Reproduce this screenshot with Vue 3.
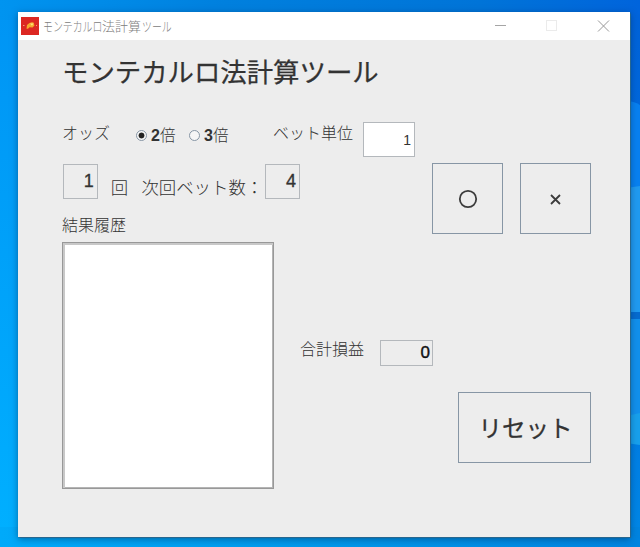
<script setup>
import { ref } from 'vue'

const odds = ref(2)
const unit = ref(1)
const count = ref(1)
const nextBet = ref(4)
const total = ref(0)
const history = ref([])

function reset() {
  count.value = 1
  nextBet.value = 4
  total.value = 0
  history.value = []
}
</script>

<template>
  <div class="desktop">
    <svg class="wallpaper" width="640" height="547" viewBox="0 0 640 547" aria-hidden="true">
      <path d="M626 101 Q634 101 640 105 V188 H626Z" fill="#0880f0" />
      <path d="M626 188 L640 186 V312 H626Z" fill="#209af0" />
      <path d="M626 319 H640 V414 L626 416Z" fill="#1290ec" />
      <path d="M626 416 L640 413 V445 L626 443Z" fill="#18a0ec" />
      <path d="M626 312 H640 V319 H626Z" fill="#066bcf" />
    </svg>
    <main class="window">
      <header class="titlebar">
        <svg class="app-icon" width="18" height="18" viewBox="0 0 18 18">
          <rect width="18" height="18" fill="#dc2722" />
          <path d="M5.500 11.800 L6 8 Q9 4.500 12.500 5.500 L13.500 8.500 L11.500 10.500 L8.500 10.200 L7 11.800Z" fill="#f4a92e" />
          <path d="M9 6.500 L12.500 6.500 L11 8.800Z" fill="#ffe680" />
          <path d="M2 8.500h1.500M15 8.500h1" stroke="#f39a70" />
        </svg>
        <span class="caption"><span class="kana long">モンテカルロ</span><span>法計算</span><span class="kana short">ツール</span></span>
        <svg class="controls" width="116" height="14" viewBox="0 0 116 14" fill="none">
          <path d="M1 6.500h11" stroke="#a5a5a5" />
          <rect x="52.500" y="1.500" width="10" height="10" stroke="#ebebeb" />
          <path d="M104 1.500l11 11M115 1.500l-11 11" stroke="#999" />
        </svg>
      </header>

      <h1>モンテカルロ法計算ツール</h1>

      <section class="options">
        <span class="label odds-label">オッズ</span>
        <label v-for="n in [2, 3]" :key="n" class="choice">
          <input v-model="odds" type="radio" name="odds" :value="n" />
          <b>{{ n }}</b><span>倍</span>
        </label>
        <span class="label unit-label">ベット単位</span>
        <input v-model="unit" class="field unit" />
      </section>

      <section class="body">
        <div class="left">
          <div class="status">
            <output class="field square">{{ count }}</output>
            <span class="text times">回</span>
            <span class="text next">次回ベット数：</span>
            <output class="field square">{{ nextBet }}</output>
          </div>
          <div class="label history-label">結果履歴</div>
          <ul class="history"><li v-for="(h, i) in history" :key="i">{{ h }}</li></ul>
        </div>
        <div class="right">
          <div class="results">
            <button aria-label="勝ち"><svg width="20" height="20" viewBox="0 0 20 20"><circle cx="10" cy="10" r="8.2" fill="none" stroke="#3c3c3c" stroke-width="1.8" /></svg></button>
            <button aria-label="負け"><svg width="20" height="20" viewBox="0 0 20 20"><path d="M5 6l9 9M14 6l-9 9" stroke="#3c3c3c" stroke-width="1.8" /></svg></button>
          </div>
          <div class="profit">
            <span class="label">合計損益</span>
            <output class="field total">{{ total }}</output>
          </div>
          <button class="reset" @click="reset">リセット</button>
        </div>
      </section>
    </main>
  </div>
</template>

<style>
body { margin: 0; overflow: hidden; }
</style>

<style scoped>
* { box-sizing: border-box; }
.desktop {
  position: relative;
  width: 640px;
  height: 547px;
  padding: 12px 0 0 18px;
  overflow: hidden;
  font-family: "Noto Sans CJK JP", sans-serif;
  color: #333;
  background:
    linear-gradient(to right, #0094f0, #0080de 35%, #0074d8 75%, #0064dc) top / 100% 20px no-repeat,
    linear-gradient(to right, #00aafa, #0098ea 50%, #0084e0) bottom / 100% 20px no-repeat,
    linear-gradient(to bottom, #0094f4, #00b0ff) left / 30px 100% no-repeat,
    linear-gradient(to bottom, #0062d8, #0070e0 55%, #0088e6) right / 30px 100% no-repeat;
}
.wallpaper { position: absolute; inset: 0; }
.window {
  position: relative;
  width: 611.5px;
  height: 525px;
  background: #ededed;
  box-shadow: 0 0 1px 0.5px #28678f, 0 2px 7px rgba(0, 35, 75, 0.5);
}
.titlebar {
  display: flex;
  align-items: center;
  height: 28px;
  padding: 0 20px 0 3px;
  background: #fff;
}
.caption {
  display: flex;
  margin: -1px 0 0 4px;
  font-size: 13px;
  font-weight: 300;
  line-height: 20px;
  color: #808080;
  white-space: nowrap;
}
.kana { transform: scaleX(0.76); transform-origin: left; }
.long { width: 59px; }
.short { width: 30px; margin-left: 1px; }
.controls { margin-left: auto; }
h1 {
  margin: 11px 0 0 44px;
  font-size: 26.4px;
  font-weight: 400;
  line-height: 40px;
  white-space: nowrap;
  -webkit-text-stroke: 0.25px #333;
}
.options {
  display: flex;
  height: 35px;
  margin: 31px 0 0 44px;
}
.label {
  position: relative;
  top: -1px;
  font-size: 16px;
  font-weight: 300;
  line-height: 22px;
  white-space: nowrap;
}
.odds-label { width: 74px; }
.choice {
  display: flex;
  align-items: center;
  width: 53px;
  height: 26px;
  font-size: 16px;
  font-weight: 300;
}
.choice b { font: bold 16px "Liberation Sans", sans-serif; padding-top: 1px; }
.choice span { font-size: 15.5px; line-height: 22px; padding-bottom: 3px; }
.choice input {
  appearance: none;
  flex: none;
  width: 11px;
  height: 11px;
  margin: 0 4px 0 0;
  border: 1px solid #8796a5;
  border-radius: 50%;
  background: #f6f6f6;
}
.choice input:checked { background: radial-gradient(circle, #222 2.6px, #f6f6f6 3.3px); }
.unit-label { width: 90px; margin-left: 31px; }
.field {
  display: flex;
  align-items: center;
  justify-content: flex-end;
  border: 1px solid #b4b8bc;
  padding: 0 3px;
  font-family: "Liberation Sans", sans-serif;
  text-align: right;
  color: #333;
}
.unit { width: 52px; height: 35px; background: #fff; font-size: 14px; outline: none; border-radius: 0; }
.body { display: flex; padding: 6px 38.5px 0 44px; }
.left { width: 238px; }
.status { display: flex; height: 35px; margin: 1px 0 0 1px; }
.square { width: 35px; height: 35px; font-size: 18px; -webkit-text-stroke: 0.3px #333; }
.text {
  font-size: 17.4px;
  font-weight: 300;
  line-height: 24px;
  padding-top: 11px;
  white-space: nowrap;
}
.times { width: 31px; margin-left: 13px; }
.next { width: 124px; }
.history-label { margin-top: 15px; }
.history {
  width: 212px;
  height: 247px;
  margin: 6px 0 0;
  padding: 0;
  list-style: none;
  background: #fff;
  border: 1px solid #989898;
  box-shadow: inset 2px 2px 0 #c8c8c8, inset -1px -1px 0 #b4b4b4;
}
.right { flex: 1; display: flex; flex-direction: column; align-items: flex-end; }
.results { display: flex; gap: 17px; }
button {
  display: flex;
  align-items: center;
  justify-content: center;
  width: 71px;
  height: 71px;
  padding: 0;
  border: 1px solid #8796a5;
  background: #ededed;
  font-family: inherit;
  color: #333;
}
.profit { display: flex; width: 291px; margin-top: 104px; }
.profit .label { width: 80px; }
.total { width: 53px; height: 26px; margin-top: 2px; padding-right: 2px; font-size: 17px; color: #111; -webkit-text-stroke: 0.4px #111; }
.reset { width: 133px; margin-top: 26px; padding: 0 0 2px 2px; font-size: 23.5px; font-weight: 400; -webkit-text-stroke: 0.3px #333; }
.next + .square { margin-left: 1px; }
</style>
